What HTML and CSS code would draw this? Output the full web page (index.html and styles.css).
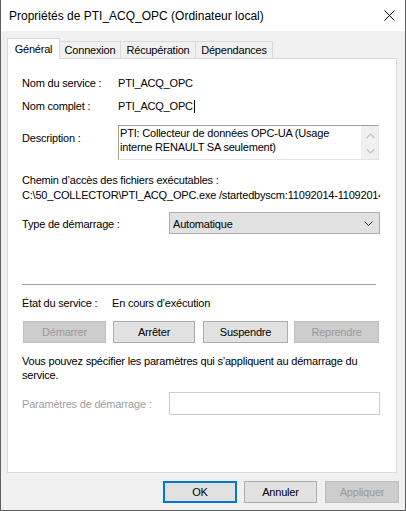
FILE: index.html
```html
<!DOCTYPE html>
<html lang="fr">
<head>
<meta charset="utf-8">
<title>Propriétés de PTI_ACQ_OPC</title>
<link rel="stylesheet" href="styles.css">
</head>
<body>
<div class="window">
  <div class="titlebar">
    <span class="title">Propriétés de PTI_ACQ_OPC (Ordinateur local)</span>
    <svg class="close" width="11" height="11" viewBox="0 0 11 11"><path d="M0.5 0.5 L10.5 10.5 M10.5 0.5 L0.5 10.5" stroke="#000" stroke-width="1" fill="none"/></svg>
  </div>
  <div class="body">
    <div class="tabs">
      <div class="tab active">Général</div>
      <div class="tab t-conn">Connexion</div>
      <div class="tab t-recup">Récupération</div>
      <div class="tab t-dep">Dépendances</div>
    </div>
    <div class="panel">
      <div class="field">
        <span class="lbl lbl-a">Nom du service :</span>
        <span>PTI_ACQ_OPC</span>
      </div>
      <div class="field r-full">
        <span class="lbl lbl-a">Nom complet :</span>
        <span>PTI_ACQ_OPC</span><span class="caret"></span>
      </div>
      <div class="r-desc">
        <span class="lbl lbl-a desc-lbl">Description :</span>
        <div class="descbox">
          <div class="desctext">PTI: Collecteur de données OPC-UA (Usage<br>interne RENAULT SA seulement)</div>
          <div class="vscroll">
            <svg width="9" height="6" viewBox="0 0 9 6"><path d="M0.5 5 L4.5 1 L8.5 5" stroke="#c2c2c2" stroke-width="1.2" fill="none"/></svg>
            <svg width="9" height="6" viewBox="0 0 9 6"><path d="M0.5 1 L4.5 5 L8.5 1" stroke="#c2c2c2" stroke-width="1.2" fill="none"/></svg>
          </div>
        </div>
      </div>
      <div class="field r-pathlbl">Chemin d’accès des fichiers exécutables :</div>
      <div class="field r-path">C:\50_COLLECTOR\PTI_ACQ_OPC.exe /startedbyscm:11092014-11092014-SERVICE</div>
      <div class="r-type">
        <span class="lbl lbl-b">Type de démarrage :</span>
        <div class="select">
          <span>Automatique</span>
          <svg width="9" height="5" viewBox="0 0 9 5"><path d="M0.5 0.5 L4.5 4.5 L8.5 0.5" stroke="#333" stroke-width="1" fill="none"/></svg>
        </div>
      </div>
      <div class="sep"></div>
      <div class="field r-state">
        <span class="lbl lbl-c">État du service :</span>
        <span>En cours d’exécution</span>
      </div>
      <div class="btnrow">
        <button class="btn disabled b1">Démarrer</button>
        <button class="btn b2">Arrêter</button>
        <button class="btn b3">Suspendre</button>
        <button class="btn disabled b4">Reprendre</button>
      </div>
      <p class="hint">Vous pouvez spécifier les paramètres qui s’appliquent au démarrage du<br>service.</p>
      <div class="r-params">
        <span class="lbl lbl-b muted">Paramètres de démarrage :</span>
        <div class="input"></div>
      </div>
    </div>
    <div class="footer">
      <button class="btn fbtn f-ok default">OK</button>
      <button class="btn fbtn f-cancel">Annuler</button>
      <button class="btn fbtn f-apply disabled">Appliquer</button>
    </div>
  </div>
</div>
</body>
</html>
```

FILE: styles.css
```css
* { box-sizing: border-box; }
html, body { margin: 0; padding: 0; }
body {
  font-family: "Liberation Sans", Arial, sans-serif;
  font-size: 11px;
  letter-spacing: -0.2px;
  color: #000;
  background: #fff;
}
.window {
  width: 406px;
  height: 511px;
  border-left: 1px solid #5f5f5f;
  border-right: 1px solid #5f5f5f;
  border-bottom: 1px solid #5f5f5f;
  display: flex;
  flex-direction: column;
  background: #f0f0f0;
}
.titlebar {
  height: 31px;
  flex: none;
  background: #fff;
  display: flex;
  align-items: center;
  padding-left: 8px;
  padding-right: 10px;
}
.title {
  font-size: 12px;
  letter-spacing: 0;
  flex: 1;
  padding-top: 1px;
}
.close { display: block; }
.body {
  flex: 1;
  padding: 7px 6px 0 6px;
  display: flex;
  flex-direction: column;
}
.tabs {
  display: flex;
  align-items: flex-end;
  height: 20px;
}
.tab {
  height: 17px;
  border-top: 1px solid #d9d9d9;
  border-right: 1px solid #d9d9d9;
  background: #f0f0f0;
  display: flex;
  align-items: center;
  justify-content: center;
  line-height: 14px;
}
.tab.active {
  width: 53px;
  height: 21px;
  margin-bottom: -1px;
  border-left: 1px solid #d9d9d9;
  background: #fff;
  position: relative;
  z-index: 1;
  padding-bottom: 1px;
}
.t-conn { width: 61px; }
.t-recup { width: 75px; }
.t-dep { width: 77px; }
.panel {
  width: 390px;
  height: 415px;
  border: 1px solid #d9d9d9;
  background: #fff;
  padding: 17px 0 0 14px;
}
.field {
  display: flex;
  height: 14px;
  line-height: 14px;
  white-space: nowrap;
}
.lbl { flex: none; }
.lbl-a { width: 96px; }
.lbl-b { width: 147px; }
.lbl-c { width: 90px; }
.r-full { margin-top: 9px; }
.caret {
  display: inline-block;
  width: 1px;
  height: 13px;
  margin-top: 1px;
  margin-left: 1px;
  background: #000;
}
.r-desc {
  margin-top: 12px;
  display: flex;
  line-height: 14px;
}
.desc-lbl { margin-top: 6px; }
.descbox {
  width: 261px;
  height: 35px;
  border-top: 1px solid #a0a0a0;
  border-left: 1px solid #a0a0a0;
  border-right: 1px solid #e3e3e3;
  border-bottom: 1px solid #e3e3e3;
  display: flex;
  background: #fff;
}
.desctext {
  flex: 1;
  padding-left: 1px;
  white-space: nowrap;
  overflow: hidden;
}
.vscroll {
  width: 17px;
  background: #f0f0f0;
  display: flex;
  flex-direction: column;
  align-items: center;
  justify-content: space-between;
  padding: 7px 0 5px 1px;
}
.vscroll svg { display: block; }
.r-pathlbl { margin-top: 13px; }
.r-path {
  margin-top: 1px;
  width: 358px;
  overflow: hidden;
}
.r-type {
  margin-top: 10px;
  display: flex;
  align-items: center;
  height: 22px;
}
.r-type .lbl { padding-top: 2px; }
.select {
  width: 211px;
  height: 22px;
  border: 1px solid #adadad;
  background: #e1e1e1;
  display: flex;
  align-items: center;
  justify-content: space-between;
  padding: 1px 6px 0 3px;
}
.select svg { display: block; }
.sep {
  margin-top: 50px;
  width: 354px;
  height: 1px;
  background: #a0a0a0;
}
.r-state { margin-top: 11px; }
.btnrow {
  margin-top: 11px;
  display: flex;
  margin-left: 1px;
}
.btn {
  font-family: inherit;
  font-size: 11px;
  letter-spacing: -0.2px;
  height: 22px;
  border: 1px solid #adadad;
  background: #e1e1e1;
  color: #000;
  padding: 0;
  margin: 0;
  line-height: 14px;
}
.btn.disabled {
  background: #cccccc;
  border-color: #bfbfbf;
  color: #9a9a9a;
}
.b1 { width: 83px; }
.b2 { width: 82px; margin-left: 7px; }
.b3 { width: 85px; margin-left: 8px; }
.b4 { width: 85px; margin-left: 6px; }
.hint {
  margin: 11px 0 0 0;
  line-height: 14px;
  white-space: nowrap;
}
.r-params {
  margin-top: 10px;
  display: flex;
  align-items: center;
  height: 23px;
}
.muted { color: #a0a0a0; padding-top: 1px; }
.input {
  width: 211px;
  height: 23px;
  border: 1px solid #cccccc;
  background: #fff;
}
.footer {
  margin-top: 8px;
  display: flex;
  justify-content: flex-end;
}
.f-ok { width: 74px; }
.f-cancel { width: 73px; margin-left: 7px; }
.f-apply { width: 74px; margin-left: 8px; }
.fbtn.default {
  border: 2px solid #0078d7;
}
```
